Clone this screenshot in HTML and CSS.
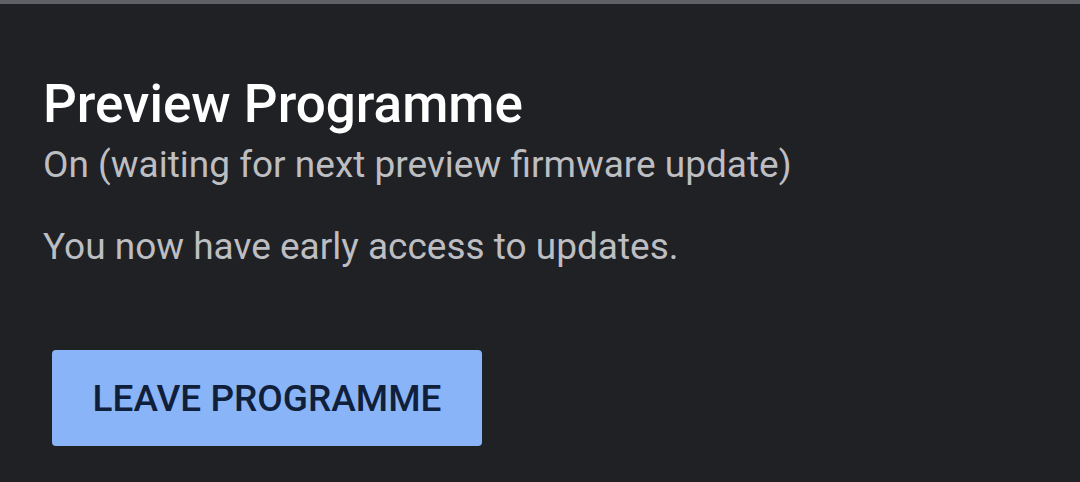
FILE: index.html
```html
<!DOCTYPE html>
<html>
<head>
<meta charset="utf-8">
<link rel="stylesheet" href="styles.css">
</head>
<body>
<div class="topbar"></div>
<main class="panel">
  <h1 class="title">Preview Programme</h1>
  <p class="status">On (waiting for next preview firmware update)</p>
  <p class="desc">You now have early access to updates.</p>
  <button class="leave">LEAVE PROGRAMME</button>
</main>
</body>
</html>
```

FILE: styles.css
```css
html, body {
  margin: 0;
  padding: 0;
  background: #202125;
  width: 1080px;
  height: 482px;
  overflow: hidden;
  font-family: Roboto, "Noto Sans", sans-serif;
}
.topbar {
  height: 4px;
  background: #5f6166;
}
.panel {
  padding: 70px 0 0 43px;
  display: flex;
  flex-direction: column;
  align-items: flex-start;
}
.title {
  margin: 0;
  font-size: 53px;
  font-weight: 500;
  line-height: 60px;
  color: #ffffff;
}
.status {
  margin: 8px 0 0 0;
  font-size: 37px;
  line-height: 46px;
  color: #bdbec2;
}
.desc {
  margin: 36px 0 0 0;
  font-size: 37px;
  line-height: 46px;
  color: #bdbec2;
}
.leave {
  margin: 80px 0 0 9px;
  width: 430px;
  height: 96px;
  border: none;
  border-radius: 4px;
  background: #8ab4f8;
  color: #10203a;
  font-family: Roboto, "Noto Sans", sans-serif;
  font-size: 37px;
  font-weight: 500;
  letter-spacing: 0;
  padding: 0;
}
```
